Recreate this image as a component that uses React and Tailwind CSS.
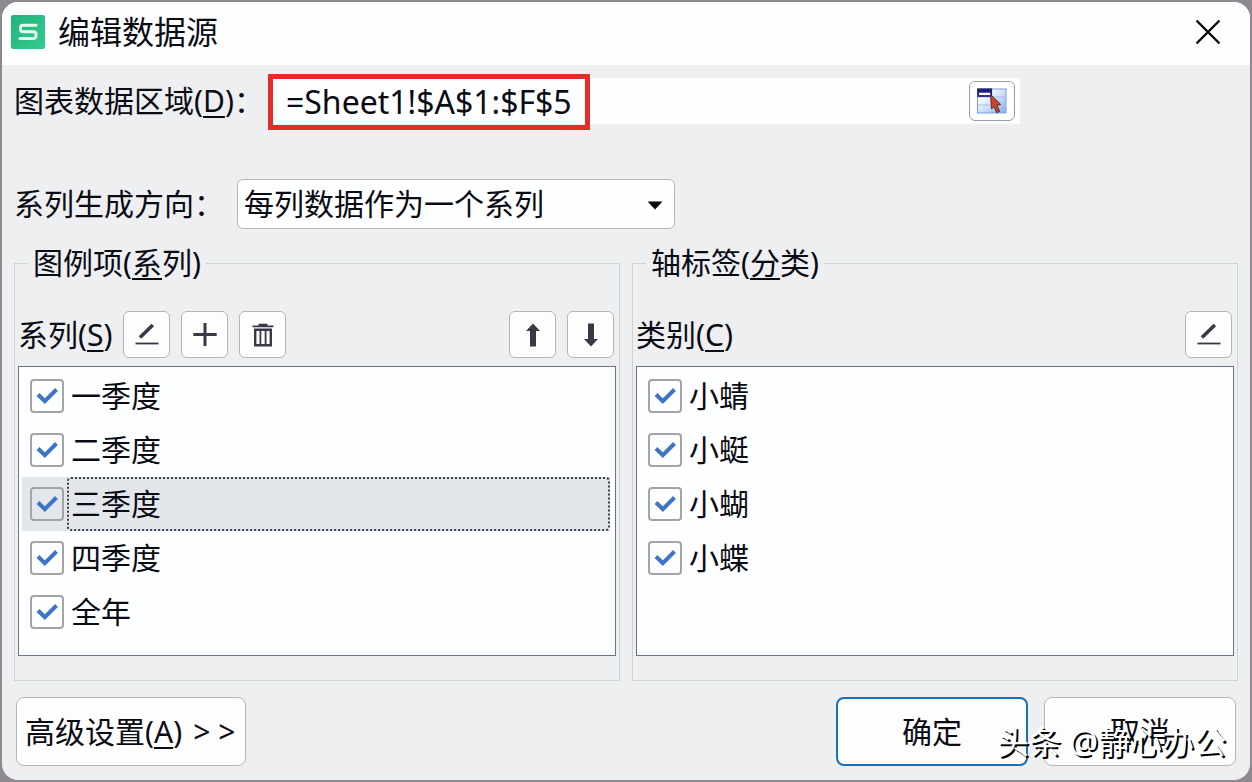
import { useState } from 'react'

const initialSeries = ['一季度', '二季度', '三季度', '四季度', '全年']
const initialCategories = ['小蜻', '小蜓', '小蝴', '小蝶']

const toItems = (names) => names.map((name) => ({ name, checked: true }))

const EditIcon = () => (
  <svg width="24" height="24" viewBox="0 0 24 24" fill="none" stroke="#3b3746">
    <path d="M5 14.5 17.8 2" strokeWidth="3.6" />
    <path d="M0.5 20.5h23" strokeWidth="1.8" />
  </svg>
)

const PlusIcon = () => (
  <svg width="24" height="24" viewBox="0 0 24 24" fill="none" stroke="#3b3746" strokeWidth="3">
    <path d="M12 0v23M0.3 11.5h23.4" />
  </svg>
)

const TrashIcon = () => (
  <svg width="24" height="24" viewBox="0 0 24 24" fill="none" stroke="#3b3746">
    <path d="M1.5 3.3h21M7.5 1.6h9" strokeWidth="1.8" />
    <path d="M4.2 6.8h15.6v15.4H4.2z" strokeWidth="2.4" />
    <path d="M9.4 7v15M14.6 7v15" strokeWidth="1.8" />
  </svg>
)

const ArrowIcon = ({ down }) => (
  <svg
    width="24"
    height="24"
    viewBox="0 0 24 24"
    fill="#3b3746"
    className={down ? 'rotate-180' : ''}
  >
    <path d="M12 0.5 19 8H15V23.5H9V8H5z" />
  </svg>
)

const RangeIcon = () => (
  <svg width="30" height="26" viewBox="0 0 30 26">
    <defs>
      <linearGradient id="cells" x1="0" y1="0" x2="1" y2="1">
        <stop offset="0.3" stopColor="#f4f9ff" />
        <stop offset="1" stopColor="#84adee" />
      </linearGradient>
    </defs>
    <rect x="0.5" y="1" width="28.5" height="24" fill="url(#cells)" stroke="#7c9fdb" />
    <path d="M1 9h28M1 17h28M14.5 1v24" stroke="#a9bfe4" fill="none" />
    <rect x="1.2" y="1.5" width="13" height="6.5" fill="#fff" stroke="#1d1f78" strokeWidth="1.8" />
    <rect x="0.5" y="0.7" width="14.5" height="4" fill="#1d1f78" />
    <path
      d="M13.5 6.5 23.8 16.4 20 17.2 22.6 23.4 19.6 24.6 17 18.6 14.6 21z"
      fill="#c8472b"
      stroke="#5e2a2c"
      strokeWidth="1"
    />
  </svg>
)

const Mnemonic = ({ children }) => (
  <u className="decoration-2 underline-offset-4">{children}</u>
)

const ToolButton = ({ label, children, onClick }) => (
  <button
    type="button"
    aria-label={label}
    onClick={onClick}
    className="flex h-[47px] w-[47px] items-center justify-center rounded-md border border-[#b4b5b9] bg-[#fdfdfe]"
  >
    {children}
  </button>
)

const CheckList = ({ items, selected, onSelect, onToggle }) => (
  <ul className="min-h-[290px] border border-[#6f7282] bg-[#fdfeff] py-[2px] pr-[5px] pl-[3px]">
    {items.map((item, index) => (
      <li
        key={item.name}
        onClick={() => onSelect(index)}
        className={`flex h-[54px] items-center ${selected === index ? 'bg-[#e3e7ec]' : ''}`}
      >
        <label className="flex h-full w-full items-center">
          <span className="grid w-[45px] items-center justify-end justify-items-center pr-[3px]">
            <input
              type="checkbox"
              checked={item.checked}
              onChange={() => onToggle(index)}
              className="col-start-1 row-start-1 h-[34px] w-[34px] appearance-none rounded-sm border-2 border-[#a3a4a8]"
            />
            {item.checked && (
              <svg
                width="22"
                height="18"
                viewBox="0 0 22 18"
                fill="none"
                stroke="#3f74c4"
                strokeWidth="4"
                className="pointer-events-none col-start-1 row-start-1"
              >
                <path d="M2 7.5 8.8 14.2 20.5 2.5" />
              </svg>
            )}
          </span>
          <span
            className={`flex h-full flex-1 items-center rounded-sm border-2 pl-[2px] ${
              selected === index ? 'border-dotted border-[#3c3f46]' : 'border-transparent'
            }`}
          >
            {item.name}
          </span>
        </label>
      </li>
    ))}
  </ul>
)

const App = () => {
  const [range, setRange] = useState('=Sheet1!$A$1:$F$5')
  const [series, setSeries] = useState(toItems(initialSeries))
  const [categories, setCategories] = useState(toItems(initialCategories))
  const [selectedSeries, setSelectedSeries] = useState(2)
  const [selectedCategory, setSelectedCategory] = useState(-1)

  const toggle = (setItems) => (index) => {
    setItems((prev) =>
      prev.map((item, i) => (i === index ? { ...item, checked: !item.checked } : item))
    )
  }

  const moveSeries = (step) => {
    const target = selectedSeries + step
    if (target < 0 || target >= series.length) return
    const next = [...series]
    next[selectedSeries] = series[target]
    next[target] = series[selectedSeries]
    setSeries(next)
    setSelectedSeries(target)
  }

  const removeSeries = () => {
    setSeries(series.filter((_, i) => i !== selectedSeries))
  }

  return (
    <div className="flex min-h-screen bg-[#8d898e] p-[2px] font-['Noto_Sans','Noto_Sans_CJK_SC',sans-serif] text-[30px] leading-10 text-[#0b0b14]">
      <div className="relative flex flex-1 flex-col overflow-hidden rounded-2xl bg-[#eeeff1]">
        <header className="flex h-[63px] items-center bg-[#fdfeff] pr-[29px] pb-[3px] pl-[9px]">
          <svg width="34" height="34" viewBox="0 0 34 34" fill="none">
            <defs>
              <linearGradient id="logo" x1="0" y1="0" x2="1" y2="1">
                <stop offset="0" stopColor="#1fb37c" />
                <stop offset="1" stopColor="#36cb90" />
              </linearGradient>
            </defs>
            <rect width="34" height="34" rx="2" fill="url(#logo)" />
            <path
              d="M25 10.2H12a2.5 2.5 0 0 0-2.5 2.5v1.6a2.5 2.5 0 0 0 2.5 2.5h10.5a2.5 2.5 0 0 1 2.5 2.5v1.7a2.5 2.5 0 0 1-2.5 2.5H9"
              stroke="#e6fbef"
              strokeWidth="3"
              strokeLinecap="round"
            />
          </svg>
          <h1 className="ml-[13px] text-[32px]">编辑数据源</h1>
          <button type="button" aria-label="关闭" className="ml-auto">
            <svg width="26" height="26" viewBox="0 0 26 26" fill="none" stroke="#08080c" strokeWidth="2.4">
              <path d="M1.5 1.5 24.5 24.5M24.5 1.5 1.5 24.5" />
            </svg>
          </button>
        </header>

        <main className="px-3 pt-[13px]">
          <div className="flex items-center">
            <label htmlFor="range" className="w-[257px]">
              图表数据区域(<Mnemonic>D</Mnemonic>)：
            </label>
            <div className="relative flex h-[46px] w-[749px] items-center bg-[#fdfeff] pr-[5px]">
              <input
                id="range"
                type="text"
                value={range}
                onChange={(e) => setRange(e.target.value)}
                className="min-w-0 flex-1 pt-[2px] pl-[15px] text-[32px] outline-none"
              />
              <button
                type="button"
                aria-label="选择区域"
                className="flex h-10 w-[46px] items-center justify-center rounded-md border border-[#9b9ca1] bg-[#fdfeff]"
              >
                <RangeIcon />
              </button>
              <div className="pointer-events-none absolute -top-[4px] -left-[3px] h-14 w-[322px] border-[5px] border-[#e32d29]" />
            </div>
          </div>

          <div className="mt-[55px] flex items-center">
            <label htmlFor="direction" className="w-[223px]">
              系列生成方向：
            </label>
            <div className="relative w-[438px]">
              <select
                id="direction"
                className="h-[50px] w-full appearance-none rounded-md border border-[#b4b5b9] bg-[#fdfeff] pl-[6px]"
              >
                <option>每列数据作为一个系列</option>
                <option>每行数据作为一个系列</option>
              </select>
              <svg
                width="16"
                height="9"
                viewBox="0 0 16 9"
                fill="#08080c"
                className="pointer-events-none absolute top-[22px] right-3"
              >
                <path d="M0.5 0.5h15L8 8.5z" />
              </svg>
            </div>
          </div>

          <div className="mt-[14px] grid grid-cols-2 gap-3">
            <fieldset className="border border-[#cdd2d5] px-[3px] pb-6">
              <legend className="ml-[10px] px-[5px]">
                图例项(<Mnemonic>系</Mnemonic>列)
              </legend>
              <div className="mt-7 mb-2 flex items-center gap-[11px]">
                <span>
                  系列(<Mnemonic>S</Mnemonic>)
                </span>
                <ToolButton label="编辑系列">
                  <EditIcon />
                </ToolButton>
                <ToolButton label="添加系列">
                  <PlusIcon />
                </ToolButton>
                <ToolButton label="删除系列" onClick={removeSeries}>
                  <TrashIcon />
                </ToolButton>
                <div className="ml-auto flex gap-[11px] pr-[2px]">
                  <ToolButton label="上移" onClick={() => moveSeries(-1)}>
                    <ArrowIcon />
                  </ToolButton>
                  <ToolButton label="下移" onClick={() => moveSeries(1)}>
                    <ArrowIcon down />
                  </ToolButton>
                </div>
              </div>
              <CheckList
                items={series}
                selected={selectedSeries}
                onSelect={setSelectedSeries}
                onToggle={toggle(setSeries)}
              />
            </fieldset>

            <fieldset className="border border-[#cdd2d5] px-[3px] pb-6">
              <legend className="ml-[10px] px-[5px]">
                轴标签(<Mnemonic>分</Mnemonic>类)
              </legend>
              <div className="mt-7 mb-2 flex items-center justify-between pr-[2px]">
                <span>
                  类别(<Mnemonic>C</Mnemonic>)
                </span>
                <ToolButton label="编辑类别">
                  <EditIcon />
                </ToolButton>
              </div>
              <CheckList
                items={categories}
                selected={selectedCategory}
                onSelect={setSelectedCategory}
                onToggle={toggle(setCategories)}
              />
            </fieldset>
          </div>
        </main>

        <footer className="mt-4 flex gap-4 px-[14px] pb-[14px]">
          <button
            type="button"
            className="mr-auto flex h-[69px] items-center gap-[11px] rounded-lg border border-[#b4b5b9] bg-[#fdfdfe] pr-[10px] pl-2"
          >
            <span>
              高级设置(<Mnemonic>A</Mnemonic>)
            </span>
            <span>&gt; &gt;</span>
          </button>
          <button
            type="submit"
            className="h-[69px] w-48 rounded-lg border-2 border-[#1a6fb5] bg-[#fdfdfe]"
          >
            确定
          </button>
          <button
            type="button"
            className="h-[69px] w-48 rounded-lg border border-[#b4b5b9] bg-[#fdfdfe]"
          >
            取消
          </button>
        </footer>

        <p className="pointer-events-none absolute right-6 bottom-[18px] text-[32px] text-white [text-shadow:2px_2px_0_#000]">
          头条 @静心办公
        </p>
      </div>
    </div>
  )
}

export default App
